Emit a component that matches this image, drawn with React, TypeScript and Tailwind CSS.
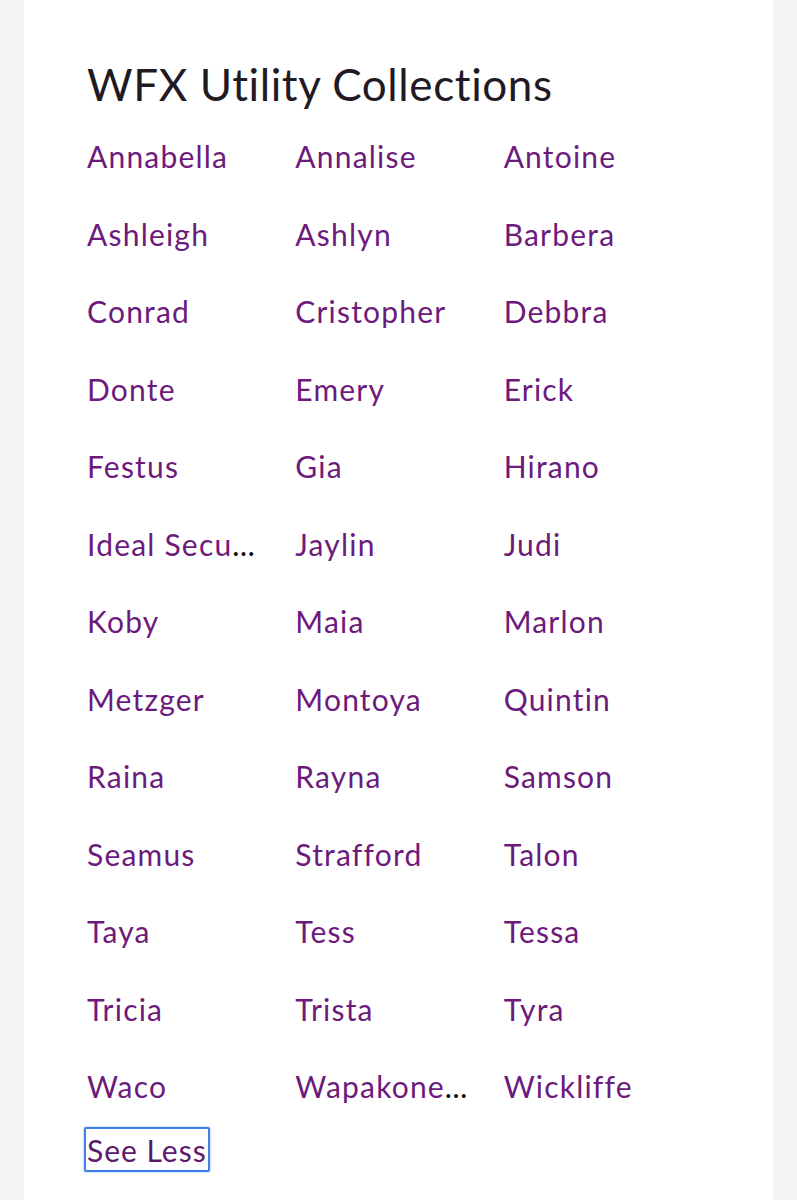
const names = [
  "Annabella", "Annalise", "Antoine",
  "Ashleigh", "Ashlyn", "Barbera",
  "Conrad", "Cristopher", "Debbra",
  "Donte", "Emery", "Erick",
  "Festus", "Gia", "Hirano",
  "Ideal Security Utility", "Jaylin", "Judi",
  "Koby", "Maia", "Marlon",
  "Metzger", "Montoya", "Quintin",
  "Raina", "Rayna", "Samson",
  "Seamus", "Strafford", "Talon",
  "Taya", "Tess", "Tessa",
  "Tricia", "Trista", "Tyra",
  "Waco", "Wapakoneta Utility", "Wickliffe",
];

export default function App() {
  return (
    <div className="min-h-[1200px] bg-[#f3f3f3] px-[24px] [font-family:Lato,'Open_Sans',sans-serif]">
      <div className="min-h-[1200px] bg-white pl-[63px] pr-[61px] pt-[56px]">
        <h2 className="text-[44px] leading-[56px] font-normal tracking-[0.6px] text-[#1f1a24]">
          WFX Utility Collections
        </h2>
        <ul className="grid grid-cols-3 auto-rows-[77.5px] mt-[24px]">
          {names.map((n) => (
            <li key={n} className="pr-[32px] text-black">
              <div className="truncate text-[30px] leading-[40px] tracking-[1.2px]">
                <a href="#" className="text-[#6c1a7c]">
                  {n}
                </a>
              </div>
            </li>
          ))}
        </ul>
        <button
          type="button"
          className="-mt-[18px] ml-[-3px] h-[45px] px-[1px] border-2 border-[#3f7fe6] rounded-[2px] text-[30px] leading-[40px] tracking-[1px] text-[#5c1a6a] shadow-[0_0_2px_#7aa7ee]"
        >
          See Less
        </button>
      </div>
    </div>
  );
}
